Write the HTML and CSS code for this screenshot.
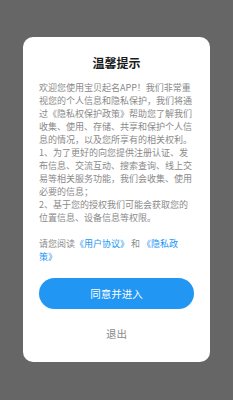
FILE: index.html
```html
<!DOCTYPE html>
<html lang="zh-CN">
<head>
  <meta charset="UTF-8">
  <meta name="viewport" content="width=device-width, initial-scale=1.0">
  <title>温馨提示</title>
  <link rel="stylesheet" href="styles.css">
</head>
<body>
  <div class="mask">
    <div class="dialog">
      <h1 class="dialog-title">温馨提示</h1>
      <div class="dialog-body">
        <p>欢迎您使用宝贝起名APP！我们非常重视您的个人信息和隐私保护，我们将通过《隐私权保护政策》帮助您了解我们收集、使用、存储、共享和保护个人信息的情况，以及您所享有的相关权利。</p>
        <p>1、为了更好的向您提供注册认证、发布信息、交流互动、搜索查询、线上交易等相关服务功能，我们会收集、使用必要的信息；</p>
        <p>2、基于您的授权我们可能会获取您的位置信息、设备信息等权限。</p>
      </div>
      <p class="dialog-links">请您阅读<a href="#">《用户协议》</a> 和 <a href="#">《隐私政策》</a></p>
      <button class="btn-agree">同意并进入</button>
      <div class="btn-exit">退出</div>
    </div>
  </div>
</body>
</html>
```

FILE: styles.css
```css
* {
  margin: 0;
  padding: 0;
  box-sizing: border-box;
}
body {
  background: #666666;
  font-family: "Noto Sans CJK SC", "Noto Sans", sans-serif;
}
.mask {
  height: 400px;
  padding-top: 37px;
}
.dialog {
  width: 187px;
  margin: 0 auto;
  background: #ffffff;
  border-radius: 10px;
  padding: 18px 16px 20px;
}
.dialog-title {
  font-size: 12px;
  line-height: 16px;
  font-weight: bold;
  color: #1a1a1a;
  text-align: center;
  margin-bottom: 10px;
}
.dialog-body p {
  font-size: 9px;
  line-height: 13px;
  color: #8a8a8a;
}
.dialog-links {
  margin-top: 13px;
  font-size: 9px;
  line-height: 13px;
  color: #8a8a8a;
  word-break: break-all;
  text-spacing-trim: space-all;
}
.dialog-links a {
  color: #2196f3;
  text-decoration: none;
}
.btn-agree {
  display: block;
  width: 100%;
  height: 31px;
  margin-top: 15px;
  border: none;
  border-radius: 16px;
  background: #2196f3;
  color: #ffffff;
  font-family: inherit;
  font-size: 10.5px;
  cursor: pointer;
}
.btn-exit {
  margin-top: 17px;
  font-size: 10.5px;
  line-height: 16px;
  color: #8a8a8a;
  text-align: center;
}
```
